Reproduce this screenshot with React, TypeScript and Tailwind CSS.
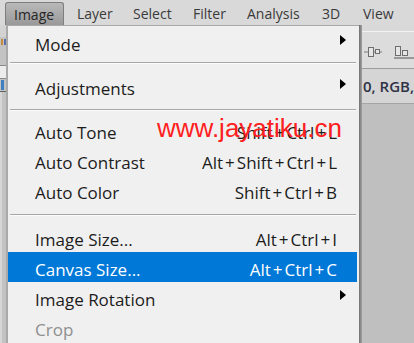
import React from 'react';

const Arrow = () => (
  <svg width="6" height="10" viewBox="0 0 6 10" className="-translate-y-[5px]">
    <polygon points="0,0 6,5 0,10" fill="#000" />
  </svg>
);

// shortcut text, the "+" in Segoe UI is wider than in Open Sans
const Keys: React.FC<{ text: string }> = ({ text }) => {
  const parts = text.split('+');
  return (
    <span className="whitespace-nowrap">
      {parts.map((p, i) => (
        <React.Fragment key={i}>
          {i > 0 && <span className="px-[2px]">+</span>}
          {p}
        </React.Fragment>
      ))}
    </span>
  );
};

type Item = { label: string; keys?: string; sub?: boolean; active?: boolean; disabled?: boolean };

const Row: React.FC<{ item: Item }> = ({ item }) => (
  <div
    className={`mr-[2px] h-[30px] pt-[5px] pl-[27px] pr-[11px] flex items-center ${
      item.active ? 'bg-[#0078d7] text-white' : item.disabled ? 'text-[#8f8f8f]' : 'text-[#1c1c1c]'
    }`}
  >
    <span className="flex-1 whitespace-nowrap">{item.label}</span>
    {item.keys && <Keys text={item.keys} />}
    <span className="w-[9px] flex justify-end">{item.sub && <Arrow />}</span>
  </div>
);

const Sep: React.FC<{ className: string }> = ({ className }) => (
  <div className={className}>
    <div className="ml-[2px] mr-[3px] h-px bg-[#a7a7a7]" />
    <div className="ml-[2px] mr-[3px] h-px bg-[#fbfbfb]" />
  </div>
);

const bar = [
  { name: 'Layer', w: 'ml-[13px] w-[56px]' },
  { name: 'Select', w: 'w-[60px]' },
  { name: 'Filter', w: 'w-[54px]' },
  { name: 'Analysis', w: 'w-[75px]' },
  { name: '3D', w: 'w-[41px]' },
  { name: 'View', w: 'w-[45px]' },
];

export default function App() {
  return (
    <div className="relative w-[414px] h-[343px] overflow-hidden bg-[#bfbfbf] font-['Open_Sans',sans-serif]">
      {/* menu bar */}
      <div className="h-[25px] bg-[#d9d9d9] flex items-end pl-[5px] text-[14px] text-[#3a3a3a]">
        <div className="h-[23px] w-[59px] rounded-t-[3px] border border-b-0 border-[#7d7d7d] bg-gradient-to-b from-[#b9b9b9] to-[#999999] pl-[8px] flex items-center text-[#262626]">
          Image
        </div>
        {bar.map((b) => (
          <div key={b.name} className={`h-[23px] flex items-center ${b.w}`}>
            {b.name}
          </div>
        ))}
      </div>

      <div className="flex h-[318px]">
        {/* app behind the menu, left edge */}
        <div className="w-[6px] bg-[#c3c3c3] flex flex-col">
          <div className="h-[12px] bg-[#d3d3d3]" />
          <div className="h-[8px] flex gap-px pl-px">
            <div className="w-[2px] h-[6px] mt-[2px] bg-[#c98a3a]" />
            <div className="w-[2px] h-[6px] mt-[2px] bg-[#5a6fa8]" />
          </div>
          <div className="h-[20px]" />
          <div className="h-[14px] bg-[#ececec] border-y border-[#8a8a8a]" />
          <div className="h-[12px] flex pl-px">
            <div className="w-[3px] h-[10px] mt-px bg-[#3f7fc0]" />
          </div>
          <div className="h-px bg-[#606060]" />
          <div className="flex-1 border-l-[2px] border-[#d6d6d6]" />
        </div>

        {/* dropdown menu */}
        <div className="w-[355px] bg-[#f0f0f0] border-l-[2px] border-t border-[#a9a9a9] text-[17px] pt-px">
          <Row item={{ label: 'Mode', sub: true }} />
          <Sep className="pt-[5px] pb-[7px]" />
          <Row item={{ label: 'Adjustments', sub: true }} />
          <Sep className="pt-[8px] pb-[4px]" />
          <Row item={{ label: 'Auto Tone', keys: 'Shift+Ctrl+L' }} />
          <Row item={{ label: 'Auto Contrast', keys: 'Alt+Shift+Ctrl+L' }} />
          <Row item={{ label: 'Auto Color', keys: 'Shift+Ctrl+B' }} />
          <Sep className="pt-[9px] pb-[6px]" />
          <Row item={{ label: 'Image Size...', keys: 'Alt+Ctrl+I' }} />
          <Row item={{ label: 'Canvas Size...', keys: 'Alt+Ctrl+C', active: true }} />
          <Row item={{ label: 'Image Rotation', sub: true }} />
          <Row item={{ label: 'Crop', disabled: true }} />
        </div>

        {/* menu shadow */}
        <div className="w-[3px] bg-gradient-to-r from-[#6f6f6f] to-[#a3a3a3]" />

        {/* panels behind, right edge */}
        <div className="flex-1 flex flex-col">
          <div className="h-[7px] bg-[#d9d9d9] border-b border-[#f2f2f2]" />
          <div className="h-[37px] bg-[#dcdcdc] border-b border-[#9d9d9d] flex items-center pt-[4px] pl-[2px] gap-[12px]">
            <svg width="18" height="12" viewBox="0 0 18 12">
              <line x1="0" y1="6" x2="18" y2="6" stroke="#7a7a7a" />
              <rect x="4.5" y="1.5" width="5" height="9" fill="#e6e6e6" stroke="#6e6e6e" />
              <rect x="11.5" y="3.5" width="4" height="4" fill="#e6e6e6" stroke="#6e6e6e" />
            </svg>
            <svg width="20" height="14" viewBox="0 0 20 14">
              <rect x="1.5" y="1.5" width="5" height="9" fill="#e6e6e6" stroke="#6e6e6e" />
              <rect x="8.5" y="5.5" width="5" height="5" fill="#e6e6e6" stroke="#6e6e6e" />
              <line x1="0" y1="13" x2="20" y2="13" stroke="#555" />
            </svg>
          </div>
          <div className="h-[35px] bg-[#d5d5d5] border-b border-[#a5a5a5] flex items-center pl-[1px] text-[15px] font-semibold text-[#2f3245] whitespace-nowrap">
            0, RGB,
          </div>
          <div className="flex-1 bg-[#bfbfbf]" />
        </div>
      </div>

      {/* watermark */}
      <div className="absolute left-[157px] top-[115px] text-[26px] leading-none text-[#ff2020] font-['Liberation_Sans',sans-serif] whitespace-nowrap">
        www.jayatiku.cn
      </div>
    </div>
  );
}
